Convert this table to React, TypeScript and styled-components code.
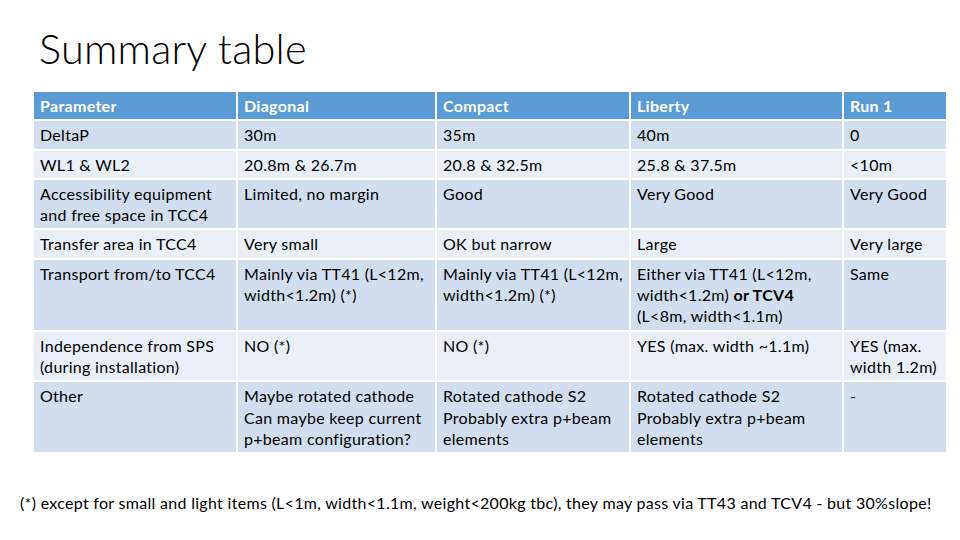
import React from "react";
import styled, { createGlobalStyle } from "styled-components";

const Global = createGlobalStyle`
  html, body { margin: 0; padding: 0; background: #ffffff; }
  body { font-family: Lato, "Open Sans", sans-serif; color: #000; }
`;

const Slide = styled.div`
  width: 960px;
  height: 540px;
  box-sizing: border-box;
  display: flex;
  flex-direction: column;
  background: #fff;
  overflow: hidden;
`;

const Title = styled.h1`
  margin: 23px 0 0 39px;
  font-family: Lato, sans-serif;
  font-weight: 300;
  font-size: 41.5px;
  letter-spacing: 0.2px;
  line-height: 50px;
  color: #000;
`;

const Table = styled.div`
  margin: 19px 0 0 34px;
  width: 912px;
  display: grid;
  grid-template-columns: 202px 197px 192px 211px 102px;
  gap: 2px;
  background: #fff;
`;

const Cell = styled.div<{ $kind: "head" | "dark" | "light" }>`
  box-sizing: border-box;
  padding: 3px 6px 3px 6px;
  font-family: Lato, sans-serif;
  font-size: 16px;
  letter-spacing: 0.3px;
  line-height: 21.3px;
  min-height: 27px;
  white-space: nowrap;
  background: ${(p) =>
    p.$kind === "head" ? "#5b9bd5" : p.$kind === "dark" ? "#d2deef" : "#eaeff7"};
  color: ${(p) => (p.$kind === "head" ? "#fff" : "#000")};
  font-weight: ${(p) => (p.$kind === "head" ? 700 : 400)};
`;

const Strong = styled.b`
  font-weight: 700;
`;

const Footnote = styled.p`
  margin: 41px 0 0 20px;
  font-family: Lato, sans-serif;
  font-size: 16px;
  letter-spacing: 0.3px;
  line-height: 20px;
  color: #000;
  white-space: nowrap;
`;

type Row = React.ReactNode[];

const header = ["Parameter", "Diagonal", "Compact", "Liberty", "Run 1"];

const rows: Row[] = [
  ["DeltaP", "30m", "35m", "40m", "0"],
  ["WL1 & WL2", "20.8m & 26.7m", "20.8 & 32.5m", "25.8 & 37.5m", "<10m"],
  [
    <>Accessibility equipment<br />and free space in TCC4</>,
    "Limited, no margin",
    "Good",
    "Very Good",
    "Very Good",
  ],
  ["Transfer area in TCC4", "Very small", "OK but narrow", "Large", "Very large"],
  [
    "Transport from/to TCC4",
    <>Mainly via TT41 (L&lt;12m,<br />width&lt;1.2m) (*)</>,
    <>Mainly via TT41 (L&lt;12m,<br />width&lt;1.2m) (*)</>,
    <>Either via TT41 (L&lt;12m,<br />width&lt;1.2m) <Strong>or TCV4</Strong><br />(L&lt;8m, width&lt;1.1m)</>,
    "Same",
  ],
  [
    <>Independence from SPS<br />(during installation)</>,
    "NO (*)",
    "NO (*)",
    "YES (max. width ~1.1m)",
    <>YES (max.<br />width 1.2m)</>,
  ],
  [
    "Other",
    <>Maybe rotated cathode<br />Can maybe keep current<br />p+beam configuration?</>,
    <>Rotated cathode S2<br />Probably extra p+beam<br />elements</>,
    <>Rotated cathode S2<br />Probably extra p+beam<br />elements</>,
    "-",
  ],
];

export default function App() {
  return (
    <Slide>
      <Global />
      <Title>Summary table</Title>
      <Table>
        {header.map((h, i) => (
          <Cell key={"h" + i} $kind="head">{h}</Cell>
        ))}
        {rows.map((r, ri) =>
          r.map((c, ci) => (
            <Cell key={ri + "-" + ci} $kind={ri % 2 === 0 ? "dark" : "light"}>
              {c}
            </Cell>
          ))
        )}
      </Table>
      <Footnote>
        (*) except for small and light items (L&lt;1m, width&lt;1.1m, weight&lt;200kg tbc), they may pass via TT43 and TCV4 - but 30%slope!
      </Footnote>
    </Slide>
  );
}
